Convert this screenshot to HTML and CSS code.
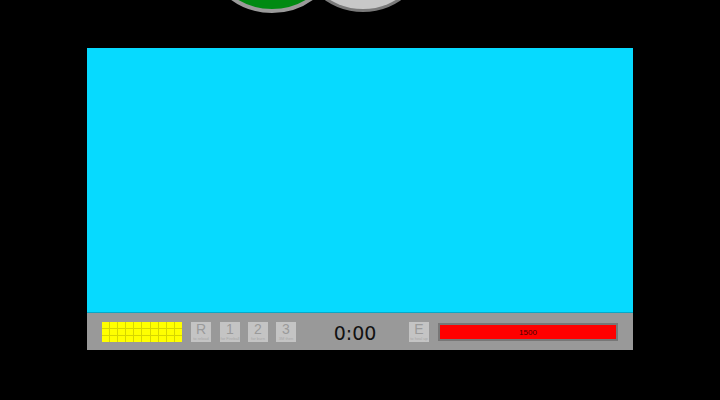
FILE: index.html
```html
<!DOCTYPE html>
<html>
<head>
<meta charset="utf-8">
<link rel="stylesheet" href="styles.css">
</head>
<body>
<div class="knobs">
  <div class="knob knob-green"></div>
  <div class="knob knob-grey"></div>
</div>
<div class="stage">
  <div class="screen"></div>
  <div class="hud">
    <div class="ammo">
      <span></span><span></span><span></span><span></span><span></span><span></span><span></span><span></span><span></span><span></span>
      <span></span><span></span><span></span><span></span><span></span><span></span><span></span><span></span><span></span><span></span>
      <span></span><span></span><span></span><span></span><span></span><span></span><span></span><span></span><span></span><span></span>
    </div>
    <div class="keys">
      <div class="key"><b>R</b><i>to reload</i></div>
      <div class="key"><b>1</b><i>for Fireball</i></div>
      <div class="key"><b>2</b><i>for burn</i></div>
      <div class="key"><b>3</b><i>3M then</i></div>
    </div>
    <div class="timer">0:00</div>
    <div class="key"><b>E</b><i>to heal up</i></div>
    <div class="health"><span>1500</span></div>
  </div>
</div>
</body>
</html>
```

FILE: styles.css
```css
html, body {
  margin: 0;
  padding: 0;
  background: #000;
  width: 720px;
  height: 400px;
  overflow: hidden;
  font-family: "Liberation Sans", Arial, sans-serif;
}

.knobs {
  position: absolute;
  left: 0;
  top: 0;
  width: 720px;
  height: 20px;
}

.knob {
  position: absolute;
  border-radius: 50%;
  box-sizing: border-box;
}

.knob-green {
  left: 202px;
  top: -127px;
  width: 140px;
  height: 140px;
  background: #008a12;
  border: 4px solid #9a9a9a;
}

.knob-grey {
  left: 296px;
  top: -122px;
  width: 134px;
  height: 134px;
  background: #c8c8c8;
  border: 3px solid #999;
  border-bottom-color: #7a7a7a;
}

.stage {
  margin: 48px 0 0 87px;
  width: 546px;
}

.screen {
  height: 265px;
  background: #06daff;
  box-shadow: inset 0 -1px 0 #08a9c8;
}

.hud {
  height: 37px;
  background: #999;
  display: flex;
  align-items: center;
  padding-left: 15px;
  box-sizing: border-box;
}

.ammo {
  width: 80px;
  height: 20px;
  display: grid;
  grid-template-columns: repeat(10, 1fr);
  grid-template-rows: repeat(3, 1fr);
  gap: 1px;
  background: #d6d600;
  margin-top: 1px;
}

.ammo span {
  background: #ffff00;
}

.keys {
  display: flex;
  gap: 8px;
  margin-left: 9px;
}

.keys .key:first-child {
  margin-right: 1px;
}

.key {
  width: 20px;
  height: 20px;
  background: #c4c4c4;
  display: flex;
  flex-direction: column;
  align-items: center;
  margin-top: 1px;
  overflow: hidden;
}

.key b {
  font-weight: normal;
  font-size: 14px;
  line-height: 15px;
  color: #9a9a9a;
}

.key i {
  font-style: normal;
  font-size: 4px;
  line-height: 4px;
  color: #a8a8a8;
  white-space: nowrap;
}

.timer {
  width: 113px;
  text-align: center;
  font-family: "DejaVu Sans", sans-serif;
  font-size: 19px;
  color: #111;
  padding-left: 5px;
  box-sizing: border-box;
  margin-top: 2px;
}

.health {
  width: 180px;
  height: 18px;
  margin-left: 9px;
  box-sizing: border-box;
  border: 2px solid #777;
  background: #ff0000;
  display: flex;
  align-items: center;
  justify-content: center;
  margin-top: 1px;
}

.health span {
  font-size: 8px;
  color: #4a0000;
}
```
